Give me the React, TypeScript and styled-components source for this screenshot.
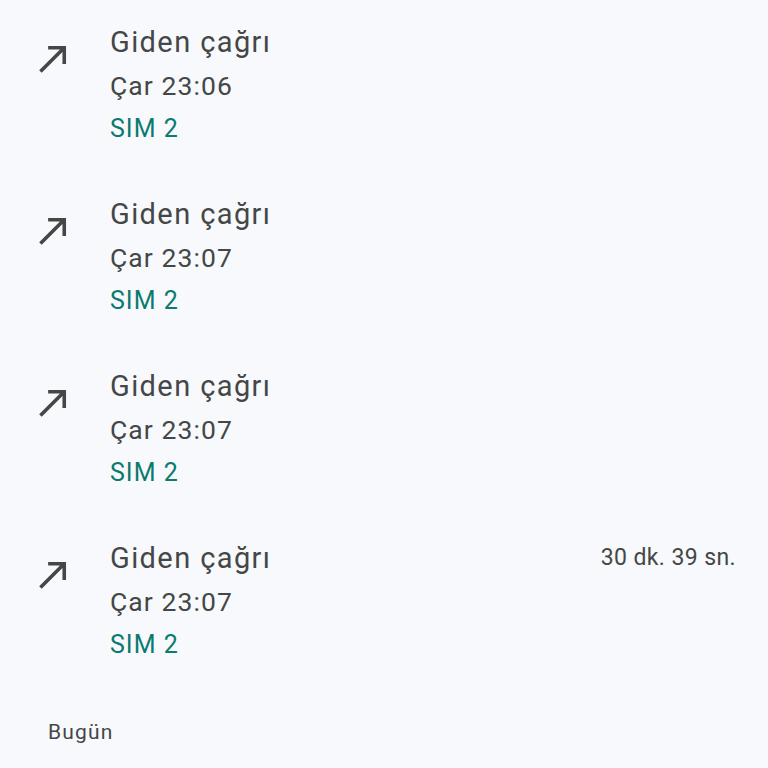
import styled, { createGlobalStyle } from "styled-components";

const GlobalStyle = createGlobalStyle`
  html, body {
    margin: 0;
    padding: 0;
    background: #f8f9fd;
  }
  body {
    font-family: Roboto, "Noto Sans", "Liberation Sans", sans-serif;
  }
`;

interface CallItem {
  time: string;
  sim: string;
  duration?: string;
}

const calls: CallItem[] = [
  { time: "Çar 23:06", sim: "SIM 2" },
  { time: "Çar 23:07", sim: "SIM 2" },
  { time: "Çar 23:07", sim: "SIM 2" },
  { time: "Çar 23:07", sim: "SIM 2", duration: "30 dk. 39 sn." },
];

const Page = styled.div`
  width: 768px;
  height: 768px;
  overflow: hidden;
  background: #f8f9fd;
`;

const Row = styled.div`
  display: grid;
  grid-template-columns: 43px 1fr auto;
  column-gap: 35px;
  height: 172px;
  box-sizing: border-box;
  padding: 20px 32px 22px 32px;
`;

const IconBox = styled.div`
  width: 43px;
  height: 43px;
  margin-top: 17px;
  color: #444746;
`;

const Info = styled.div`
  display: flex;
  flex-direction: column;
`;

const Title = styled.div`
  font-size: 29px;
  line-height: 44px;
  letter-spacing: 1.4px;
  color: #444746;
`;

const Time = styled.div`
  font-size: 26.5px;
  line-height: 44px;
  letter-spacing: 1.1px;
  color: #444746;
`;

const Sim = styled.div`
  font-size: 25px;
  line-height: 42px;
  letter-spacing: 1px;
  color: #0b7a6f;
`;

const Duration = styled.div`
  font-size: 23px;
  line-height: 44px;
  letter-spacing: 0.4px;
  color: #444746;
`;

const Section = styled.div`
  padding: 28px 48px 0;
  font-size: 21px;
  line-height: 32px;
  letter-spacing: 1.2px;
  color: #444746;
`;

const OutgoingIcon = () => (
  <svg viewBox="0 0 24 24" width="43" height="43" fill="currentColor">
    <path d="M9 5v2h6.59L4 18.59 5.41 20 17 8.41V15h2V5z" />
  </svg>
);

export default function App() {
  return (
    <Page>
      <GlobalStyle />
      {calls.map((c, i) => (
        <Row key={i}>
          <IconBox>
            <OutgoingIcon />
          </IconBox>
          <Info>
            <Title>Giden çağrı</Title>
            <Time>{c.time}</Time>
            <Sim>{c.sim}</Sim>
          </Info>
          <Duration>{c.duration}</Duration>
        </Row>
      ))}
      <Section>Bugün</Section>
    </Page>
  );
}
